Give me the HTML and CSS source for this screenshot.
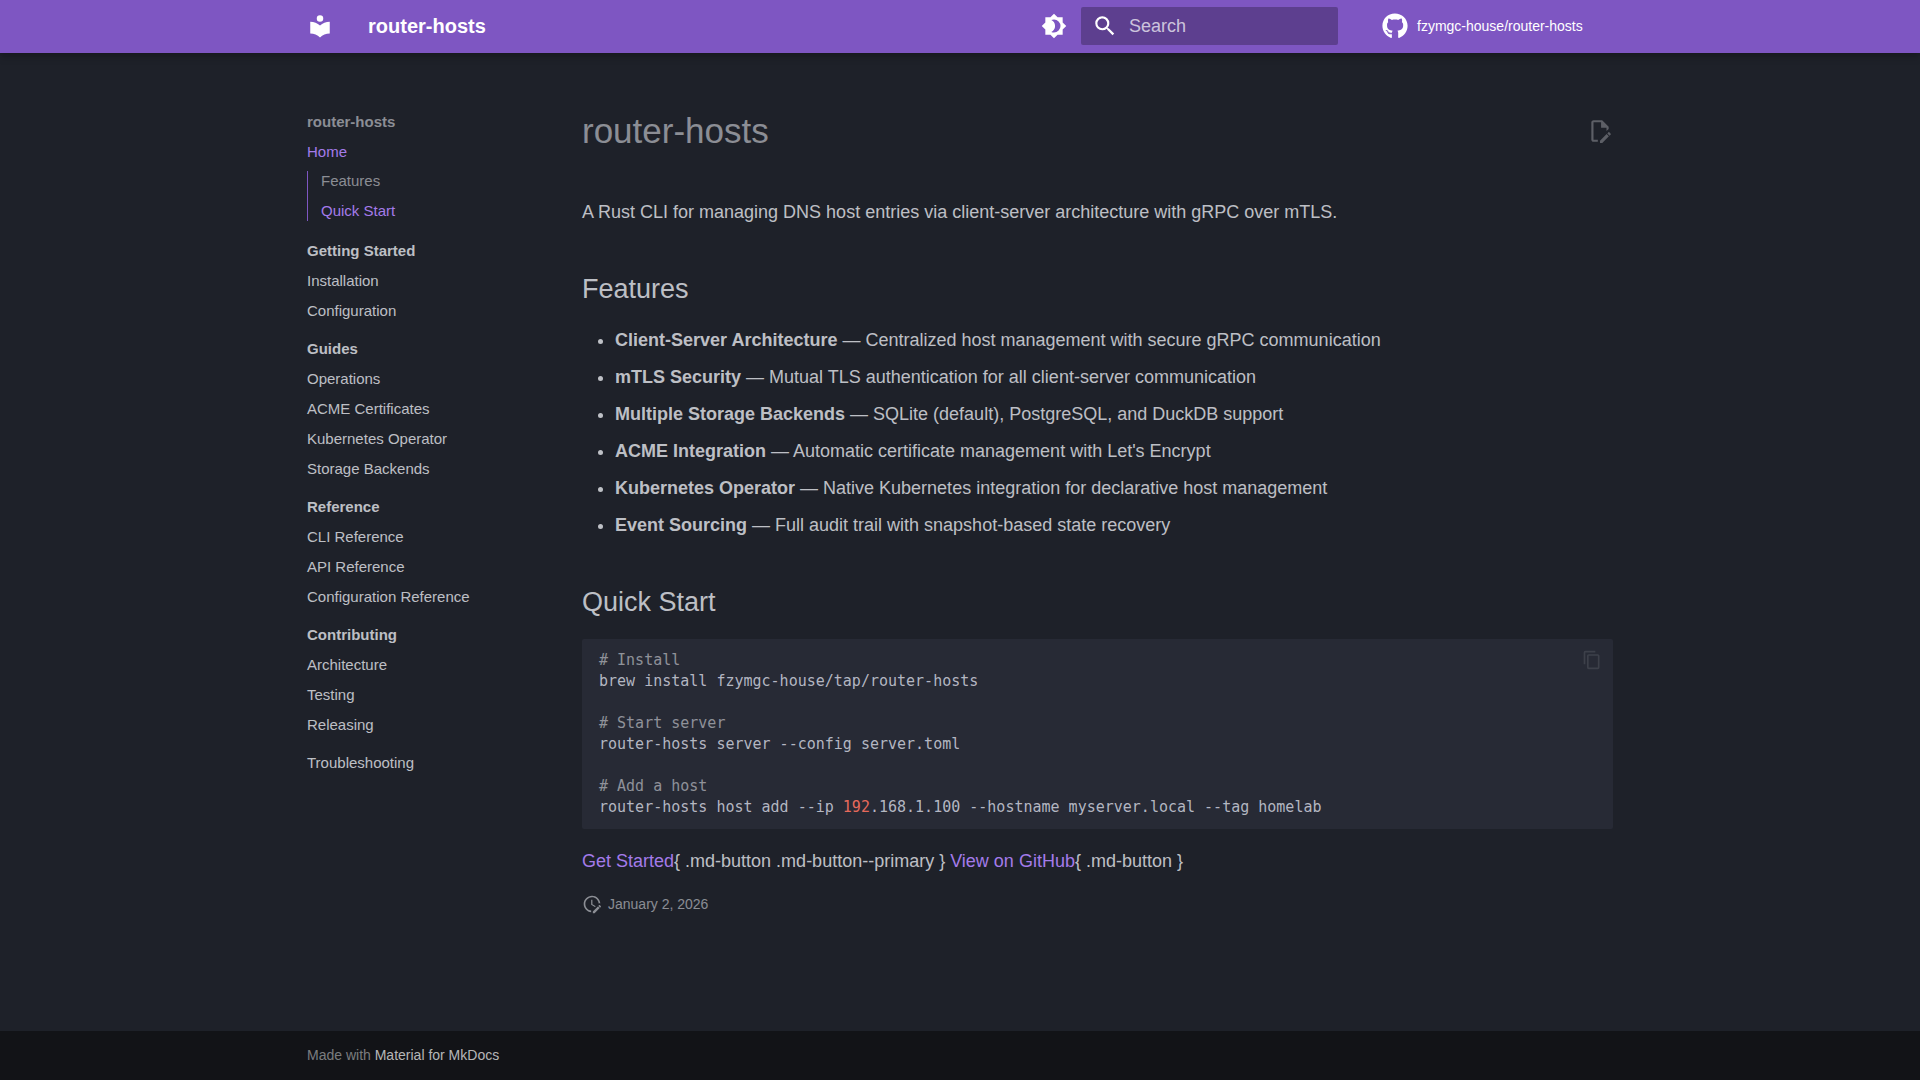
FILE: index.html
```
<!DOCTYPE html>
<html lang="en">
<head>
    <meta charset="UTF-8">
    <meta name="viewport" content="width=device-width, initial-scale=1.0">
    <title>router-hosts</title>
    <link rel="stylesheet" href="styles.css">
</head>
<body>
    <header class="header">
        <div class="grid header-inner">
            <a class="logo" href="#" aria-label="router-hosts">
                <svg class="icon" viewBox="0 0 24 24"><path d="M12 8a3 3 0 0 0 3-3 3 3 0 0 0-3-3 3 3 0 0 0-3 3 3 3 0 0 0 3 3m0 3.54C9.64 9.35 6.5 8 3 8v11c3.5 0 6.64 1.35 9 3.54 2.36-2.19 5.5-3.54 9-3.54V8c-3.5 0-6.64 1.35-9 3.54"/></svg>
            </a>
            <span class="site-title">router-hosts</span>
            <button class="palette" type="button" aria-label="Switch theme">
                <svg class="icon" viewBox="0 0 24 24"><path d="M12 18c-.89 0-1.74-.2-2.5-.55C11.56 16.5 13 14.42 13 12s-1.44-4.5-3.5-5.45C10.26 6.2 11.11 6 12 6a6 6 0 0 1 6 6 6 6 0 0 1-6 6m8-9.31V4h-4.69L12 .69 8.69 4H4v4.69L.69 12 4 15.31V20h4.69L12 23.31 15.31 20H20v-4.69L23.31 12z"/></svg>
            </button>
            <form class="search">
                <label for="search" aria-label="Search">
                    <svg class="icon" viewBox="0 0 24 24"><path d="M9.5 3A6.5 6.5 0 0 1 16 9.5c0 1.61-.59 3.09-1.56 4.23l.27.27h.79l5 5-1.5 1.5-5-5v-.79l-.27-.27A6.52 6.52 0 0 1 9.5 16 6.5 6.5 0 0 1 3 9.5 6.5 6.5 0 0 1 9.5 3m0 2C7 5 5 7 5 9.5S7 14 9.5 14 14 12 14 9.5 12 5 9.5 5"/></svg>
                </label>
                <input id="search" type="text" placeholder="Search">
            </form>
            <a class="source" href="#">
                <svg class="icon" viewBox="0 0 496 512"><path d="M165.9 397.4c0 2-2.3 3.6-5.2 3.6-3.3.3-5.6-1.3-5.6-3.6 0-2 2.3-3.6 5.2-3.6 3-.3 5.6 1.3 5.6 3.6m-31.1-4.5c-.7 2 1.3 4.3 4.3 4.9 2.6 1 5.6 0 6.2-2s-1.3-4.3-4.3-5.2c-2.6-.7-5.5.3-6.2 2.3m44.2-1.7c-2.9.7-4.9 2.6-4.6 4.9.3 2 2.9 3.3 5.9 2.6 2.9-.7 4.9-2.6 4.6-4.6-.3-1.9-3-3.2-5.9-2.9M244.8 8C106.1 8 0 113.3 0 252c0 110.9 69.8 205.8 169.5 239.2 12.8 2.3 17.3-5.6 17.3-12.1 0-6.2-.3-40.4-.3-61.4 0 0-70 15-84.7-29.8 0 0-11.4-29.1-27.8-36.6 0 0-22.9-15.7 1.6-15.4 0 0 24.9 2 38.6 25.8 21.9 38.6 58.6 27.5 72.9 20.9 2.3-16 8.8-27.1 16-33.7-55.9-6.2-112.3-14.3-112.3-110.5 0-27.5 7.6-41.3 23.6-58.9-2.6-6.5-11.1-33.3 2.6-67.9 20.9-6.5 69 27 69 27 20-5.6 41.5-8.5 62.8-8.5s42.8 2.9 62.8 8.5c0 0 48.1-33.6 69-27 13.7 34.7 5.2 61.4 2.6 67.9 16 17.7 25.8 31.5 25.8 58.9 0 96.5-58.9 104.2-114.8 110.5 9.2 7.9 17 22.9 17 46.4 0 33.7-.3 75.4-.3 83.6 0 6.5 4.6 14.4 17.3 12.1C428.2 457.8 496 362.9 496 252 496 113.3 383.5 8 244.8 8M97.2 352.9c-1.3 1-1 3.3.7 5.2 1.6 1.6 3.9 2.3 5.2 1 1.3-1 1-3.3-.7-5.2-1.6-1.6-3.9-2.3-5.2-1m-10.8-8.1c-.7 1.3.3 2.9 2.3 3.9 1.6 1 3.6.7 4.3-.7.7-1.3-.3-2.9-2.3-3.9-2-.6-3.6-.3-4.3.7m32.4 35.6c-1.6 1.3-1 4.3 1.3 6.2 2.3 2.3 5.2 2.6 6.5 1 1.3-1.3.7-4.3-1.3-6.2-2.2-2.3-5.2-2.6-6.5-1m-11.4-14.7c-1.6 1-1.6 3.6 0 5.9s4.3 3.3 5.6 2.3c1.6-1.3 1.6-3.9 0-6.2-1.4-2.3-4-3.3-5.6-2"/></svg>
                fzymgc-house/router-hosts
            </a>
        </div>
    </header>

    <div class="grid main">
        <nav class="sidebar">
            <div class="nav-title">router-hosts</div>
            <ul>
                <li>
                    <a class="active" href="#">Home</a>
                    <ul class="toc">
                        <li><a class="passed" href="#features">Features</a></li>
                        <li><a class="active" href="#quick-start">Quick Start</a></li>
                    </ul>
                </li>
                <li class="section">
                    <span>Getting Started</span>
                    <ul>
                        <li><a href="#">Installation</a></li>
                        <li><a href="#">Configuration</a></li>
                    </ul>
                </li>
                <li class="section">
                    <span>Guides</span>
                    <ul>
                        <li><a href="#">Operations</a></li>
                        <li><a href="#">ACME Certificates</a></li>
                        <li><a href="#">Kubernetes Operator</a></li>
                        <li><a href="#">Storage Backends</a></li>
                    </ul>
                </li>
                <li class="section">
                    <span>Reference</span>
                    <ul>
                        <li><a href="#">CLI Reference</a></li>
                        <li><a href="#">API Reference</a></li>
                        <li><a href="#">Configuration Reference</a></li>
                    </ul>
                </li>
                <li class="section">
                    <span>Contributing</span>
                    <ul>
                        <li><a href="#">Architecture</a></li>
                        <li><a href="#">Testing</a></li>
                        <li><a href="#">Releasing</a></li>
                    </ul>
                </li>
                <li class="section"><a href="#">Troubleshooting</a></li>
            </ul>
        </nav>

        <article class="content">
            <div class="title-row">
                <h1>router-hosts</h1>
                <a class="edit" href="#" aria-label="Edit this page">
                    <svg class="icon" viewBox="0 0 24 24"><path d="M10 20H6V4h7v5h5v3.1l2-2V8l-6-6H6c-1.1 0-2 .9-2 2v16c0 1.1.9 2 2 2h4zm10.2-7c.1 0 .3.1.4.2l1.3 1.3c.2.2.2.6 0 .8l-1 1-2.1-2.1 1-1c.1-.1.2-.2.4-.2m0 3.9L14.1 23H12v-2.1l6.1-6.1z"/></svg>
                </a>
            </div>
            <p class="intro">A Rust CLI for managing DNS host entries via client-server architecture with gRPC over mTLS.</p>

            <h2 id="features">Features</h2>
            <ul class="features">
                <li><strong>Client-Server Architecture</strong> — Centralized host management with secure gRPC communication</li>
                <li><strong>mTLS Security</strong> — Mutual TLS authentication for all client-server communication</li>
                <li><strong>Multiple Storage Backends</strong> — SQLite (default), PostgreSQL, and DuckDB support</li>
                <li><strong>ACME Integration</strong> — Automatic certificate management with Let's Encrypt</li>
                <li><strong>Kubernetes Operator</strong> — Native Kubernetes integration for declarative host management</li>
                <li><strong>Event Sourcing</strong> — Full audit trail with snapshot-based state recovery</li>
            </ul>

            <h2 id="quick-start">Quick Start</h2>
            <div class="code">
<pre><code><span class="comment"># Install</span>
brew install fzymgc-house/tap/router-hosts

<span class="comment"># Start server</span>
router-hosts server --config server.toml

<span class="comment"># Add a host</span>
router-hosts host add --ip <span class="number">192</span>.168.1.100 --hostname myserver.local --tag homelab</code></pre>
                <button class="copy" type="button" aria-label="Copy to clipboard">
                    <svg viewBox="0 0 24 24"><path d="M19 21H8V7h11m0-2H8a2 2 0 0 0-2 2v14a2 2 0 0 0 2 2h11a2 2 0 0 0 2-2V7a2 2 0 0 0-2-2m-3-4H4a2 2 0 0 0-2 2v14h2V3h12z"/></svg>
                </button>
            </div>
            <p><a href="#">Get Started</a>{ .md-button .md-button--primary } <a href="#">View on GitHub</a>{ .md-button }</p>

            <div class="updated">
                <svg viewBox="0 0 24 24"><path d="M21 13.1c-.1 0-.3.1-.4.2l-1 1 2.1 2.1 1-1c.2-.2.2-.6 0-.8l-1.3-1.3c-.1-.1-.2-.2-.4-.2m-1.9 1.8-6.1 6V23h2.1l6.1-6.1zM12.5 7v5.2l4 2.4-1 1L11 13V7zM11 21.9c-5.1-.5-9-4.8-9-9.9C2 6.5 6.5 2 12 2c5.3 0 9.6 4.1 10 9.3-.3-.1-.6-.2-1-.2s-.7.1-1 .2C19.6 7.2 16.2 4 12 4c-4.4 0-8 3.6-8 8 0 4.1 3.1 7.5 7.1 7.9l-.1.2z"/></svg>
                January 2, 2026
            </div>
        </article>
    </div>

    <footer class="footer">
        <div class="grid copyright">Made with <a href="#">Material for MkDocs</a></div>
    </footer>
</body>
</html>
```
FILE: styles.css
```
:root {
    --primary: #7e56c2;
    --link: #a47bea;
    --bg: #1e2129;
    --fg: rgba(226, 228, 233, 0.82);
    --fg-light: rgba(226, 228, 233, 0.56);
    --fg-lighter: rgba(226, 228, 233, 0.32);
    --fg-lightest: rgba(226, 228, 233, 0.12);
}
* {
    box-sizing: border-box;
}
body {
    display: flex;
    flex-direction: column;
    min-height: 100vh;
    margin: 0;
    background-color: var(--bg);
    color: var(--fg);
    font-family: "Liberation Sans", Arial, sans-serif;
    font-size: 18px;
    line-height: 28px;
}
a {
    color: var(--link);
    text-decoration: none;
}
svg {
    display: block;
    fill: currentColor;
}
button {
    padding: 0;
    border: none;
    background: none;
    cursor: pointer;
}
.icon {
    width: 26px;
    height: 26px;
}
.grid {
    width: 100%;
    max-width: 1342px;
    margin: 0 auto;
    padding: 0 18px;
}

/* Header */
.header {
    background-color: var(--primary);
    color: white;
    box-shadow: 0 0 4px rgba(0, 0, 0, 0.1), 0 4px 8px rgba(0, 0, 0, 0.2);
}
.header-inner {
    display: flex;
    align-items: center;
    height: 53px;
    padding-bottom: 1px;
}
.header a,
.palette {
    color: white;
}
.site-title {
    flex: 1;
    margin-left: 35px;
    font-size: 20px;
    font-weight: bold;
}
.search {
    display: flex;
    align-items: center;
    gap: 11px;
    width: 257px;
    height: 38px;
    margin-left: 14px;
    padding: 0 11px;
    border-radius: 2px;
    background-color: rgba(0, 0, 0, 0.26);
}
.search input {
    flex: 1;
    min-width: 0;
    padding: 0;
    border: none;
    outline: none;
    background: none;
    color: white;
    font: inherit;
}
.search input::placeholder {
    color: rgba(255, 255, 255, 0.7);
}
.source {
    display: flex;
    align-items: center;
    gap: 9px;
    width: 231px;
    margin-left: 44px;
    font-size: 14px;
}

/* Page body */
.main {
    display: flex;
    flex: 1;
    padding-top: 55px;
}
.sidebar {
    flex: none;
    width: 275px;
    padding-top: 4px;
    font-size: 15px;
    line-height: 20px;
}
.sidebar ul {
    margin: 0;
    padding: 0;
    list-style: none;
}
.sidebar li {
    margin-top: 10px;
}
.sidebar a {
    color: var(--fg);
}
.sidebar .active {
    color: var(--link);
}
.sidebar .passed,
.nav-title {
    color: var(--fg-light);
}
.nav-title,
.section > span {
    font-weight: bold;
}
.sidebar .section {
    margin-top: 18px;
}
.sidebar .toc {
    margin: 9px 0 20px;
    padding-left: 13px;
    border-left: 1px solid var(--primary);
}
.toc li:first-child {
    margin-top: 0;
}

/* Article */
.content {
    flex: 1;
    min-width: 0;
    padding-bottom: 36px;
}
.title-row {
    display: flex;
    align-items: center;
    justify-content: space-between;
}
h1 {
    margin: 0;
    color: var(--fg-light);
    font-size: 35px;
    font-weight: normal;
    line-height: 46px;
}
.edit {
    color: var(--fg-lighter);
}
h2 {
    margin: 44px 0 18px;
    font-size: 27px;
    font-weight: normal;
    line-height: 38px;
}
p {
    margin: 18px 0;
}
.intro {
    margin: 44px 0;
}
.features {
    margin: 0;
    padding-left: 33px;
}
.features li + li {
    margin-top: 9px;
}
.code {
    position: relative;
    border-radius: 2px;
    background-color: #272a35;
}
.code pre {
    margin: 0;
    padding: 11px 17px;
    overflow: auto;
    color: rgba(213, 216, 226, 0.82);
    font-family: "DejaVu Sans Mono", monospace;
    font-size: 15px;
    line-height: 21px;
}
.code code {
    font-family: inherit;
}
.comment {
    color: var(--fg-light);
}
.number {
    color: #e6695b;
}
.copy {
    position: absolute;
    top: 11px;
    right: 11px;
    color: var(--fg-lightest);
}
.copy svg,
.updated svg {
    width: 20px;
    height: 20px;
}
.updated {
    display: flex;
    align-items: center;
    gap: 6px;
    color: var(--fg-light);
    font-size: 14px;
    line-height: 22px;
}

/* Footer */
.footer {
    background-color: #121317;
    font-size: 14px;
}
.copyright {
    padding-top: 10px;
    padding-bottom: 11px;
    color: rgba(255, 255, 255, 0.45);
}
.copyright a {
    color: rgba(255, 255, 255, 0.7);
}
```
